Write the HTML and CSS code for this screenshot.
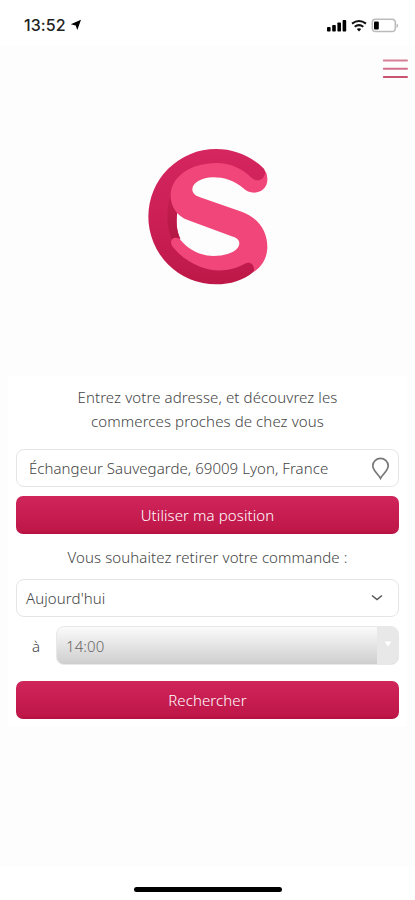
FILE: index.html
```html
<!DOCTYPE html>
<html lang="fr">
<head>
<meta charset="utf-8">
<meta name="viewport" content="width=device-width, initial-scale=1">
<title>Commerces proches de chez vous</title>
<link rel="stylesheet" href="styles.css">
</head>
<body>
<header class="status">
  <span class="clock">13:52</span>
  <svg class="locate" width="12" height="12" viewBox="0 0 12 12"><path d="M11 .8 7.3 11 5.7 6.5.8 5.2Z"/></svg>
  <svg class="signals" width="72" height="16" viewBox="0 0 72 16">
    <g><rect x="0" y="9" width="3.6" height="4.5" rx=".8"/><rect x="5.2" y="7" width="3.6" height="6.5" rx=".8"/><rect x="10.4" y="4.5" width="3.6" height="9" rx=".8"/><rect x="15.6" y="2" width="3.6" height="11.5" rx=".8"/></g>
    <g fill="none" stroke="#111" stroke-width="2"><path d="M25 5.6Q32 .3 39 5.6"/><path d="M27.7 8.8Q32 5.5 36.3 8.8"/></g><path d="M29.8 11.1Q32 9.5 34.2 11.1L32 13.4Z"/>
    <rect x="45.3" y="1.3" width="23" height="12.3" rx="3.3" fill="#fff" stroke="#bbb" stroke-width="1.5"/><rect x="47" y="3.6" width="4.8" height="8" rx="1"/><path d="M69.5 5.3Q73 7.7 69.5 10Z" fill="#bbb"/>
  </svg>
</header>
<main class="screen">
  <svg class="menu" width="26" height="20" viewBox="0 0 26 20" fill="none" stroke-width="2" stroke-linecap="round"><path stroke="#d77e98" d="M1.8 1.5H25"/><path stroke="#d46e8c" d="M1.8 9.8H25"/><path stroke="#cb5273" d="M1.8 18H25"/></svg>
  <svg class="logo" width="160" height="165" viewBox="0 0 480 495">
    <defs>
      <linearGradient id="ring" x1="0" y1="0" x2="0" y2="1"><stop offset="0" stop-color="#d5265f"/><stop offset=".45" stop-color="#cd2057"/><stop offset="1" stop-color="#bd1848"/></linearGradient>
      <linearGradient id="shade" x1="0" y1="0" x2="0" y2="1"><stop offset="0" stop-color="#c51e50"/><stop offset="1" stop-color="#b41843"/></linearGradient>
    </defs>
    <path fill="url(#ring)" d="M402 101C364 64 315 42 258 42A203 203 0 0 0 258 448C302 448 340 436 370 411L383 398 380 370 250 382C205 378 175 355 135 320L151 312C140 288 138 265 141 238L200 110 375 142Q425 145 402 101Z"/>
    <path fill="url(#shade)" d="M122 182C108 220 109 267 124 310L151 312C140 288 138 265 141 238Z"/>
    <path fill="#f04679" d="M412 130C414 154 397 173 373 173 359 173 348 168 340 160 313 136 280 127 250 127 214 128 187 144 187 163 187 176 197 182 210 187L335 230C385 248 412 288 412 335 412 367 397 394 371 411 376 390 361 378 347 385 300 412 250 411 210 395 174 380 147 360 127 334 116 318 130 303 147 310 174 345 213 363 250 363 292 363 327 349 328 325 328 313 318 308 305 304L175 256C143 244 122 218 122 182 122 126 180 84 260 84 306 84 341 105 363 127 381 144 403 137 407 108Q411 117 412 130Z"/>
  </svg>
  <section class="card">
    <p class="intro"><span>Entrez votre adresse, et découvrez les</span><br><span>commerces proches de chez vous</span></p>
    <div class="field address"><span>Échangeur Sauvegarde, 69009 Lyon, France</span>
      <svg width="19" height="23" viewBox="0 0 19 23" fill="none" stroke="#777" stroke-width="1.7"><path d="M9.5 21.3C7.8 17.8 1.8 13.6 1.8 8.7A7.7 7.3 0 0 1 17.2 8.7C17.2 13.6 11.2 17.8 9.5 21.3Z"/></svg>
    </div>
    <button class="action position"><span>Utiliser ma position</span></button>
    <p class="when"><span>Vous souhaitez retirer votre commande :</span></p>
    <div class="field day"><span>Aujourd'hui</span>
      <svg width="12" height="8" viewBox="0 0 12 8" fill="none" stroke="#555" stroke-width="1.5"><path d="m1 1.5 5 4 5-4"/></svg>
    </div>
    <div class="hour"><span class="at">à</span><div class="time"><span>14:00</span><i><svg width="8" height="6" viewBox="0 0 8 6"><path d="M.5.5h7L4 5.5Z" fill="#fff"/></svg></i></div></div>
    <button class="action search"><span>Rechercher</span></button>
  </section>
</main>
<footer class="home"><div></div></footer>
</body>
</html>
```
FILE: styles.css
```css
* { box-sizing: border-box; }
body { margin: 0; width: 415px; height: 900px; overflow: hidden; background: #fff; color: #444; font: 300 15px/24px "Noto Sans", "Open Sans", sans-serif; letter-spacing: .1px; }
svg { display: block; flex: none; }
p { margin: 0; }
.status { height: 46px; display: flex; align-items: flex-start; padding: 15px 16px 0 24px; color: #222; }
.clock { width: 43px; font: 500 16px/20px Inter, sans-serif; letter-spacing: .1px; }
.locate { margin: 4px 0 0 3px; }
.signals { margin: 3px 0 0 auto; }
.screen { height: 821px; background: #fdfdfd; padding: 13px 8px 0; }
.menu { margin: 0 -1px 0 auto; }
.logo { margin: 56px 0 0 122px; }
.card { margin-top: 76px; height: 351px; padding: 9px 8px 0; background: #fff; }
.card span { white-space: nowrap; }
.intro { height: 64px; text-align: center; }
.field { height: 38px; display: flex; align-items: center; justify-content: space-between; border: 1px solid #e5e5e5; border-radius: 8px; background: #fff; }
.address { padding: 0 8px 0 12px; letter-spacing: .05px; }
.action { display: block; width: 100%; height: 38px; padding: 0; border: 0; border-radius: 7px; color: #fff; font: inherit; letter-spacing: inherit; background: linear-gradient(#cf255b, #c01749 90%, #b51040); }
.position { margin-top: 9px; }
.when { margin: 11px 0 10px; text-align: center; }
.day { padding: 0 15px 0 9px; }
.hour { display: flex; margin-top: 9px; height: 39px; align-items: center; }
.at { width: 40px; padding-left: 16px; }
.time { flex: 1; height: 39px; display: flex; align-items: center; justify-content: space-between; padding-left: 9px; border: 1px solid #e8e8e8; border-radius: 8px; overflow: hidden; background: linear-gradient(#fbfbfb, #cecece); color: #666; }
.time i { width: 21px; height: 100%; display: flex; align-items: center; justify-content: center; background: #e8e8e8; padding-bottom: 4px; }
.search { margin-top: 16px; }
.home { height: 33px; display: flex; justify-content: center; padding-top: 20px; }
.home div { width: 148px; height: 5px; border-radius: 3px; background: #000; }
```
